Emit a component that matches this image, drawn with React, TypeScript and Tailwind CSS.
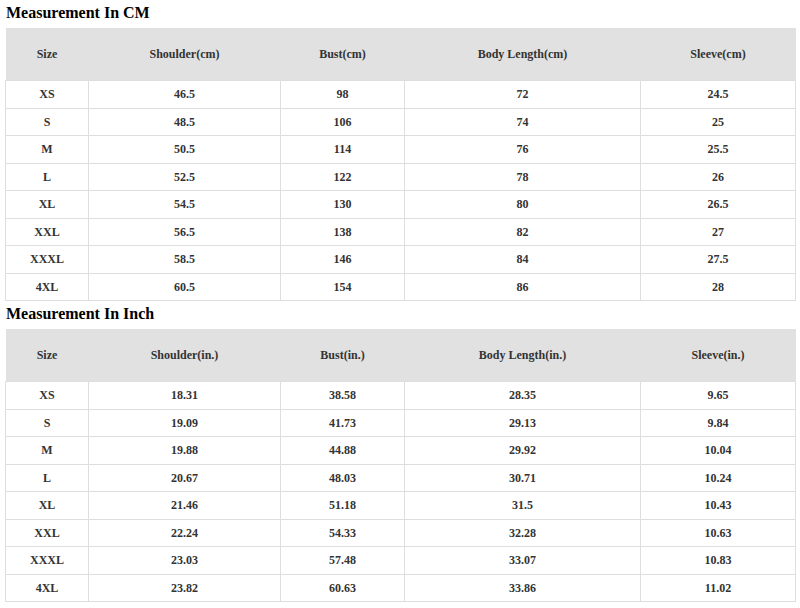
const HEAD_CM = ["Size", "Shoulder(cm)", "Bust(cm)", "Body Length(cm)", "Sleeve(cm)"];
const HEAD_IN = ["Size", "Shoulder(in.)", "Bust(in.)", "Body Length(in.)", "Sleeve(in.)"];

const ROWS_CM = [
  ["XS", "46.5", "98", "72", "24.5"],
  ["S", "48.5", "106", "74", "25"],
  ["M", "50.5", "114", "76", "25.5"],
  ["L", "52.5", "122", "78", "26"],
  ["XL", "54.5", "130", "80", "26.5"],
  ["XXL", "56.5", "138", "82", "27"],
  ["XXXL", "58.5", "146", "84", "27.5"],
  ["4XL", "60.5", "154", "86", "28"],
];

const ROWS_IN = [
  ["XS", "18.31", "38.58", "28.35", "9.65"],
  ["S", "19.09", "41.73", "29.13", "9.84"],
  ["M", "19.88", "44.88", "29.92", "10.04"],
  ["L", "20.67", "48.03", "30.71", "10.24"],
  ["XL", "21.46", "51.18", "31.5", "10.43"],
  ["XXL", "22.24", "54.33", "32.28", "10.63"],
  ["XXXL", "23.03", "57.48", "33.07", "10.83"],
  ["4XL", "23.82", "60.63", "33.86", "11.02"],
];

function SizeTable({ title, head, rows }: { title: string; head: string[]; rows: string[][] }) {
  return (
    <div>
      <div className="pt-[3px] pb-[5px] pl-[1px] text-[16px] leading-[20px] font-bold text-black">{title}</div>
      <table className="w-[790px] table-fixed border-collapse text-[12px] font-bold text-[#333]">
        <colgroup>
          <col className="w-[83px]" />
          <col className="w-[192px]" />
          <col className="w-[124px]" />
          <col className="w-[236px]" />
          <col className="w-[155px]" />
        </colgroup>
        <thead>
          <tr className="bg-[#e1e1e1]">
            {head.map((h) => (
              <th key={h} className="h-[52.5px] p-0 text-center align-middle font-bold">
                {h}
              </th>
            ))}
          </tr>
        </thead>
        <tbody>
          {rows.map((row) => (
            <tr key={row[0]}>
              {row.map((cell, i) => (
                <td key={i} className="h-[27.5px] p-0 text-center align-middle border border-[#dedede]">
                  {cell}
                </td>
              ))}
            </tr>
          ))}
        </tbody>
      </table>
    </div>
  );
}

export default function App() {
  return (
    <div className="w-[800px] h-[608px] bg-white px-[5px] font-['Liberation_Serif','Times_New_Roman',serif]">
      <SizeTable title="Measurement In CM" head={HEAD_CM} rows={ROWS_CM} />
      <SizeTable title="Measurement In Inch" head={HEAD_IN} rows={ROWS_IN} />
    </div>
  );
}
